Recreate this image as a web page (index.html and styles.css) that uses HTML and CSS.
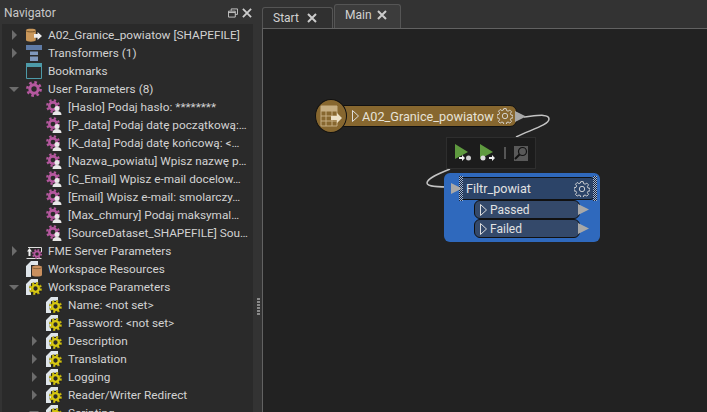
FILE: index.html
```html
<!DOCTYPE html>
<html lang="en">
<head>
    <meta charset="UTF-8">
    <meta name="viewport" content="width=device-width, initial-scale=1.0">
    <title>Main</title>
    <link rel="stylesheet" href="styles.css">
</head>
<body>
    <!-- shared tree icons -->
    <svg class="defs" aria-hidden="true">
        <symbol id="gear-pink" viewBox="0 0 16 16">
            <circle cx="8" cy="8" r="6.6" fill="none" stroke="#b5589f" stroke-width="2.6" stroke-dasharray="2.6 2.6"/>
            <circle cx="8" cy="8" r="4.2" fill="none" stroke="#b5589f" stroke-width="3"/>
        </symbol>
        <symbol id="gear-yellow" viewBox="0 0 14 14">
            <circle cx="7" cy="7" r="5.8" fill="none" stroke="#d8c811" stroke-width="2.4" stroke-dasharray="2.3 2.25"/>
            <circle cx="7" cy="7" r="3.6" fill="none" stroke="#d8c811" stroke-width="2.6"/>
            <circle cx="7" cy="7" r="6.6" fill="none" stroke="#000" stroke-width=".5" opacity=".5"/>
        </symbol>
        <symbol id="param-user" viewBox="0 0 16 16">
            <use href="#gear-pink" width="14" height="14"/>
            <circle cx="11" cy="9.5" r="2.5" fill="#e8e8e8"/>
            <path d="M6.5 16c0-3 2-4 4.500-4s4.500 1 4.500 4z" fill="#e8e8e8"/>
        </symbol>
        <symbol id="param-ws" viewBox="0 0 16 16">
            <path d="M0 5 5 0h7v4H5v12H0z" fill="#dfe5ea"/>
            <use href="#gear-yellow" x="3" y="3" width="13" height="13"/>
        </symbol>
        <symbol id="cog-line" viewBox="0 0 16 16">
            <path d="M6.800 .6h2.400l.4 2 1.500.6 1.700-1.100 1.700 1.700-1.100 1.700.6 1.500 2 .4v2.400l-2 .4-.6 1.500 1.100 1.700-1.700 1.700-1.700-1.100-1.500.6-.4 2H6.800l-.4-2-1.500-.6-1.700 1.100-1.700-1.700 1.100-1.700-.6-1.500-2-.4V6.800l2-.4.6-1.500-1.100-1.700 1.700-1.700 1.700 1.100 1.500-.6z" fill="none" stroke="#ddd" stroke-width=".9"/>
            <circle cx="8" cy="8" r="2.700" fill="none" stroke="#ddd" stroke-width=".9"/>
        </symbol>
    </svg>

    <aside class="navigator">
        <header class="nav-header">
            <span class="nav-title">Navigator</span>
            <svg class="nav-btn" viewBox="0 0 11 11"><path d="M3.500 3V1h7v6H8M.5 3.500h7.500v6.500H.5zM.5 5h7.500" fill="none" stroke="#ccc"/></svg>
            <svg class="nav-btn" viewBox="0 0 11 11"><path d="M1 1l9 9M10 1l-9 9" stroke="#ccc" stroke-width="2"/></svg>
        </header>
        <ul class="tree">
            <li class="row closed">
                <svg class="icon" viewBox="0 0 18 16">
                    <path d="M0 2.500C0 .5 11 .5 11 2.500V14C11 16 0 16 0 14z" fill="#c9975a"/>
                    <path d="M0 3c0 2 11 2 11 0" fill="none" stroke="#6d4f27"/>
                    <path d="M9 7h4V4.500L18 9l-5 4.500V11H9z" fill="#eee"/>
                </svg>
                <span>A02_Granice_powiatow [SHAPEFILE]</span>
            </li>
            <li class="row closed">
                <svg class="icon" viewBox="0 0 16 16">
                    <path d="M0 0h16v5H0z" fill="#5f7ba6"/>
                    <path d="M4 6.500h8V10H4zM4 11.500h8V16H4z" fill="#8098bd"/>
                </svg>
                <span>Transformers (1)</span>
            </li>
            <li class="row">
                <svg class="icon" viewBox="0 0 16 16">
                    <path d="M0 0h16v4H0z" fill="#4d9aa8"/>
                    <path d="M.5 .5h15v15H.5z" fill="none" stroke="#4d9aa8"/>
                </svg>
                <span>Bookmarks</span>
            </li>
            <li class="row open">
                <svg class="icon"><use href="#gear-pink"/></svg>
                <span>User Parameters (8)</span>
            </li>
            <li class="row sub"><svg class="icon"><use href="#param-user"/></svg><span>[Haslo] Podaj hasło: ********</span></li>
            <li class="row sub"><svg class="icon"><use href="#param-user"/></svg><span>[P_data] Podaj datę początkową:…</span></li>
            <li class="row sub"><svg class="icon"><use href="#param-user"/></svg><span>[K_data] Podaj datę końcową: &lt;…</span></li>
            <li class="row sub"><svg class="icon"><use href="#param-user"/></svg><span>[Nazwa_powiatu] Wpisz nazwę p…</span></li>
            <li class="row sub"><svg class="icon"><use href="#param-user"/></svg><span>[C_Email] Wpisz e-mail docelow…</span></li>
            <li class="row sub"><svg class="icon"><use href="#param-user"/></svg><span>[Email] Wpisz e-mail: smolarczy…</span></li>
            <li class="row sub"><svg class="icon"><use href="#param-user"/></svg><span>[Max_chmury] Podaj maksymal…</span></li>
            <li class="row sub"><svg class="icon"><use href="#param-user"/></svg><span>[SourceDataset_SHAPEFILE] Sou…</span></li>
            <li class="row closed">
                <svg class="icon" viewBox="0 0 16 16">
                    <path d="M2 4.500h13.500V9M.5 15.500h15" fill="none" stroke="#ddd"/>
                    <path d="M3.500 5 6 8.500H4.500V13h-2V8.500H1z" fill="#eee"/>
                    <use href="#gear-pink" x="6" y="6" width="10" height="10"/>
                </svg>
                <span>FME Server Parameters</span>
            </li>
            <li class="row">
                <svg class="icon" viewBox="0 0 16 16">
                    <path d="M0 5 5 0h7v4H5v12H0z" fill="#dfe5ea"/>
                    <path d="M6 6C6 4 16 4 16 6v8c0 2-10 2-10 0z" fill="#c98f5e"/>
                    <path d="M6 6.500c0 1.500 10 1.500 10 0" fill="none" stroke="#6d4f27" stroke-width=".7"/>
                </svg>
                <span>Workspace Resources</span>
            </li>
            <li class="row open"><svg class="icon"><use href="#param-ws"/></svg><span>Workspace Parameters</span></li>
            <li class="row sub"><svg class="icon"><use href="#param-ws"/></svg><span>Name: &lt;not set&gt;</span></li>
            <li class="row sub"><svg class="icon"><use href="#param-ws"/></svg><span>Password: &lt;not set&gt;</span></li>
            <li class="row sub closed"><svg class="icon"><use href="#param-ws"/></svg><span>Description</span></li>
            <li class="row sub closed"><svg class="icon"><use href="#param-ws"/></svg><span>Translation</span></li>
            <li class="row sub closed"><svg class="icon"><use href="#param-ws"/></svg><span>Logging</span></li>
            <li class="row sub closed"><svg class="icon"><use href="#param-ws"/></svg><span>Reader/Writer Redirect</span></li>
            <li class="row sub open"><svg class="icon"><use href="#param-ws"/></svg><span>Scripting</span></li>
        </ul>
    </aside>

    <div class="splitter">
        <div class="grip"></div>
    </div>

    <main class="main">
        <div class="tabs">
            <div class="tab">
                <span>Start</span>
                <svg class="tab-close" viewBox="0 0 10 10"><path d="M1 1l8 8M9 1l-8 8" stroke="#ccc" stroke-width="2"/></svg>
            </div>
            <div class="tab active">
                <span>Main</span>
                <svg class="tab-close" viewBox="0 0 10 10"><path d="M1 1l8 8M9 1l-8 8" stroke="#ccc" stroke-width="2"/></svg>
            </div>
        </div>

        <div class="canvas">
            <!-- viewBox is in page coordinates so the wire reads like the screenshot -->
            <svg class="wires" viewBox="263 29 444 383">
                <path d="M524 117C535 116 549 113 549 119C549 125 530 130 516 137" fill="none" stroke="#c4c4c4" stroke-width="1.500"/>
                <path d="M450 169C440 173 427 178 427 183C427 187 440 187 453 187" fill="none" stroke="#c4c4c4" stroke-width="1.500"/>
            </svg>

            <div class="reader">
                <div class="reader-badge">
                    <svg width="22" height="22" viewBox="0 0 22 22">
                        <path d="M1 1h16v20H1zM1 6h16M1 11h16M1 16h16M6 6v15M12 6v15" fill="none" stroke="#c6ae82"/>
                        <path d="M1 1h16v5H1z" fill="#c6ae82"/>
                        <path d="M11 11h6V8l5 5-5 5v-3h-6z" fill="#eee2c8"/>
                    </svg>
                </div>
                <div class="reader-body">
                    <svg class="open-tri" viewBox="0 0 7 12"><path d="M.5 .5 6.500 6 .5 11.500z" fill="none" stroke="#ddd"/></svg>
                    <span class="node-name">A02_Granice_powiatow</span>
                    <svg class="cog" viewBox="0 0 16 16"><use href="#cog-line"/></svg>
                </div>
                <svg class="port out" viewBox="0 0 11 11"><path d="M0 0 11 5.500 0 11z"/></svg>
            </div>

            <div class="toolbar">
                <svg class="run" viewBox="0 0 16 18">
                    <path d="M0 0 13 8 0 15z" fill="#5f9a3f"/>
                    <path d="M4 13h3v-2l3 3-3 3v-2H4z" fill="#eee"/>
                    <circle cx="13.500" cy="14" r="2.500" fill="#ccc"/>
                </svg>
                <svg class="run" viewBox="0 0 16 18">
                    <path d="M0 0 13 8 0 15z" fill="#5f9a3f"/>
                    <circle cx="3" cy="14" r="2.500" fill="#ddd"/>
                    <path d="M9 13h3v-2l3 3-3 3v-2H9z" fill="#eee"/>
                </svg>
                <div class="tool-sep"></div>
                <div class="tool-search">
                    <svg viewBox="0 0 14 14" width="14" height="14">
                        <circle cx="8.500" cy="5.500" r="4" fill="none" stroke="#111" stroke-width="1.200"/>
                        <path d="M5.500 8.500 1 13" stroke="#111" stroke-width="2"/>
                    </svg>
                </div>
            </div>

            <div class="transformer">
                <div class="tf-head">
                    <span class="node-name">Filtr_powiat</span>
                    <svg class="cog" viewBox="0 0 16 16"><use href="#cog-line"/></svg>
                </div>
                <div class="handle left"></div>
                <div class="handle right"></div>
                <svg class="port in" viewBox="0 0 11 11"><path d="M0 0 11 5.500 0 11z"/></svg>
                <div class="tf-port">
                    <svg class="open-tri" viewBox="0 0 7 12"><path d="M.5 .5 6.500 6 .5 11.500z" fill="none" stroke="#ddd"/></svg>
                    <span>Passed</span>
                    <svg class="port out" viewBox="0 0 11 11"><path d="M0 0 11 5.500 0 11z"/></svg>
                </div>
                <div class="tf-port">
                    <svg class="open-tri" viewBox="0 0 7 12"><path d="M.5 .5 6.500 6 .5 11.500z" fill="none" stroke="#ddd"/></svg>
                    <span>Failed</span>
                    <svg class="port out" viewBox="0 0 11 11"><path d="M0 0 11 5.500 0 11z"/></svg>
                </div>
            </div>
        </div>
    </main>
</body>
</html>
```

FILE: styles.css
```css
html, body {
    height: 100%;
}

body {
    display: flex;
    margin: 0;
    overflow: hidden;
    background-color: #333;
    color: #d2d2d2;
    font-family: Roboto, "Noto Sans", sans-serif;
    font-size: 12px;
}

.defs {
    position: absolute;
    width: 0;
    height: 0;
}

/* navigator panel */
.navigator {
    width: 253px;
    flex-shrink: 0;
    display: flex;
    flex-direction: column;
    overflow: hidden;
}

.nav-header {
    height: 24px;
    flex-shrink: 0;
    display: flex;
    align-items: center;
    gap: 4px;
    padding: 2px 1px 0 4px;
    box-sizing: border-box;
}

.nav-title {
    flex-grow: 1;
    font-size: 12px;
    color: #c8c8c8;
}

.nav-btn {
    width: 10px;
    height: 10px;
}

.tree {
    flex-grow: 1;
    margin: 0 0 0 2px;
    padding: 2px 0 0;
    list-style: none;
    background-color: #2a2a2a;
    font-size: 11.800px;
}

.row {
    position: relative;
    height: 18px;
    display: flex;
    align-items: center;
    gap: 6px;
    padding-left: 24px;
    white-space: nowrap;
}

.row.sub {
    padding-left: 44px;
}

.icon {
    width: 16px;
    height: 16px;
    flex-shrink: 0;
    overflow: visible;
}

/* expand / collapse arrows in the tree */
.row.closed::before,
.row.open::before {
    content: "";
    position: absolute;
    border-style: solid;
    border-color: transparent;
}

.row.closed::before {
    left: 10px;
    top: 4px;
    border-width: 5px 0 5px 5px;
    border-left-color: #6c6c6c;
}

.row.open::before {
    left: 7px;
    top: 7px;
    border-width: 5px 5px 0;
    border-top-color: #6c6c6c;
}

.row.sub.closed::before {
    left: 30px;
}

.row.sub.open::before {
    left: 27px;
}

.splitter {
    width: 9px;
    flex-shrink: 0;
    display: flex;
    justify-content: center;
    padding-top: 298px;
    box-sizing: border-box;
}

.grip {
    width: 3px;
    height: 17px;
    margin-left: 2px;
    background-image: linear-gradient(#8a8a8a 2px, transparent 2px);
    background-size: 3px 3px;
}

/* tabs + canvas */
.main {
    flex-grow: 1;
    min-width: 0;
    display: flex;
    flex-direction: column;
}

.tabs {
    height: 28px;
    flex-shrink: 0;
    display: flex;
    align-items: flex-end;
    gap: 1px;
    box-sizing: border-box;
}

.tab {
    display: flex;
    align-items: center;
    justify-content: space-between;
    box-sizing: border-box;
    width: 71px;
    height: 21px;
    padding: 0 15px 0 10px;
    background-color: #303030;
    border: 1px solid #555;
    border-bottom: 0;
    border-radius: 3px 3px 0 0;
}

.tab.active {
    width: 67px;
    height: 24px;
    padding: 0 13px 3px 10px;
    background-color: #3c3c3c;
}

.tab-close {
    width: 10px;
    height: 10px;
}

.canvas {
    position: relative;
    flex-grow: 1;
    background-color: #222;
    border-top: 1px solid #626262;
    border-left: 1px solid #626262;
}

.wires {
    position: absolute;
    left: 0;
    top: 0;
    width: 444px;
    height: 383px;
}

.node-name {
    flex-grow: 1;
}

.open-tri {
    width: 7px;
    height: 12px;
    flex-shrink: 0;
}

.cog {
    width: 16px;
    height: 16px;
    flex-shrink: 0;
}

.port {
    position: absolute;
    width: 11px;
    height: 11px;
    fill: #a8a8a8;
}

/* reader feature type, positions are free on the canvas */
.reader {
    position: absolute;
    left: 52px;
    top: 70px;
    display: flex;
    align-items: center;
    width: 202px;
    height: 34px;
}

.reader-badge {
    position: relative;
    z-index: 1;
    width: 32px;
    height: 34px;
    flex-shrink: 0;
    display: flex;
    align-items: center;
    justify-content: center;
    box-sizing: border-box;
    background-color: #87672f;
    border: 1px solid #111;
    border-radius: 50%;
}

.reader-body {
    display: flex;
    align-items: center;
    gap: 3px;
    width: 174px;
    height: 22px;
    margin-left: -4px;
    padding: 0 3px 0 8px;
    box-sizing: border-box;
    background-color: #87672f;
    border: 1px solid #111;
    border-radius: 0 7px 7px 0;
    font-size: 12.700px;
    color: #e6e2d8;
}

.reader .port.out {
    right: -9px;
    top: 12px;
}

.toolbar {
    position: absolute;
    left: 183px;
    top: 108px;
    display: flex;
    align-items: center;
    gap: 9px;
    width: 90px;
    height: 32px;
    padding: 0 8px;
    box-sizing: border-box;
    background-color: #1c1c1c;
    border: 1px solid #2e2e2e;
}

.run {
    width: 16px;
    height: 18px;
    flex-shrink: 0;
}

.tool-sep {
    width: 2px;
    height: 12px;
    margin: 0 -1px;
    background-color: #555;
    flex-shrink: 0;
}

.tool-search {
    width: 15px;
    height: 15px;
    display: flex;
    align-items: center;
    justify-content: center;
    background-color: #595959;
}

/* selected transformer */
.transformer {
    position: absolute;
    left: 181px;
    top: 144px;
    display: flex;
    flex-direction: column;
    width: 156px;
    height: 69px;
    padding: 4px 4px 0 16px;
    box-sizing: border-box;
    background-color: #2f69bd;
    border-radius: 6px;
    color: #e2e2e2;
}

.transformer .port.in {
    left: 7px;
    top: 10px;
}

.handle {
    position: absolute;
    top: 3px;
    width: 4px;
    height: 25px;
    background-image: repeating-conic-gradient(#9fb6d8 0 25%, #1a2438 0 50%);
    background-size: 2px 2px;
}

.handle.left {
    left: 15px;
}

.handle.right {
    right: 3px;
}

.tf-head {
    display: flex;
    align-items: center;
    height: 23px;
    padding: 0 5px 0 5px;
    box-sizing: border-box;
    background-color: #2c4468;
    border: 1px solid #111;
    border-radius: 0 6px 6px 0;
    font-size: 12.600px;
}

.tf-port {
    position: relative;
    display: flex;
    align-items: center;
    gap: 3px;
    width: 106px;
    height: 19px;
    margin-left: 14px;
    padding-left: 5px;
    box-sizing: border-box;
    background-color: #34496a;
    border: 1px solid #111;
    border-radius: 6px;
}

.tf-port .port.out {
    right: -10px;
    top: 3px;
}
```
